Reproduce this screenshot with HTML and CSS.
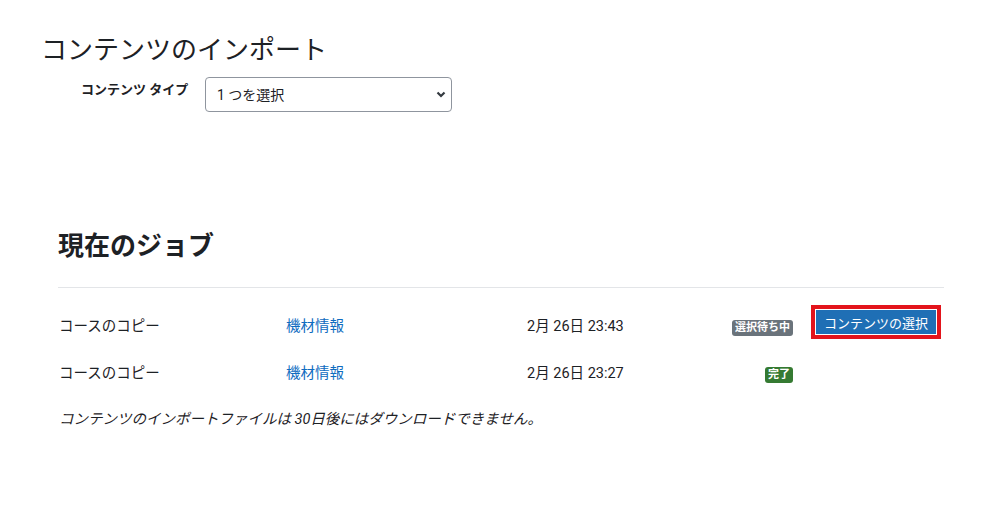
FILE: index.html
```html
<!DOCTYPE html>
<html lang="ja">
<head>
    <meta charset="UTF-8">
    <meta name="viewport" content="width=device-width, initial-scale=1.0">
    <title>コンテンツのインポート</title>
    <link rel="stylesheet" href="styles.css">
</head>
<body>
    <div id="main">
        <h1 class="page-title">コンテンツのインポート</h1>
        <div class="form-row">
            <label class="form-label" for="ctype">コンテンツ タイプ</label>
            <select id="ctype" class="form-select">
                <option>1 つを選択</option>
            </select>
        </div>

        <div class="jobs">
            <h2 class="jobs-title">現在のジョブ</h2>
            <hr class="divider">
            <div class="job">
                <span>コースのコピー</span>
                <a href="#" class="job-link">機材情報</a>
                <span>2月 26日 23:43</span>
                <span class="badge badge-wait">選択待ち中</span>
                <button class="btn-select">コンテンツの選択</button>
            </div>
            <div class="job">
                <span>コースのコピー</span>
                <a href="#" class="job-link">機材情報</a>
                <span>2月 26日 23:27</span>
                <span class="badge badge-done">完了</span>
                <span></span>
            </div>
            <p class="note">コンテンツのインポートファイルは 30日後にはダウンロードできません。</p>
        </div>
    </div>
</body>
</html>
```

FILE: styles.css
```css
body {
    margin: 0;
    font-family: Roboto, "Noto Sans CJK JP", sans-serif;
    font-size: 14.5px;
    color: #1d2125;
    background: #fff;
}
#main {
    padding: 35px 0 0 41px;
}
.page-title {
    margin: 0;
    font-size: 26px;
    font-weight: 400;
    line-height: 31px;
}
.form-row {
    display: flex;
    align-items: flex-start;
    margin-top: 11px;
    padding-left: 40px;
}
.form-label {
    width: 124px;
    font-size: 13px;
    font-weight: 700;
    line-height: 20px;
    padding-top: 3px;
    white-space: nowrap;
}
.form-select {
    appearance: none;
    -webkit-appearance: none;
    box-sizing: border-box;
    width: 247px;
    height: 35px;
    padding: 0 30px 0 11px;
    border: 1px solid #8f959e;
    border-radius: 4px;
    font-family: Roboto, "Noto Sans CJK JP", sans-serif;
    font-size: 14px;
    color: #1d2125;
    background: #fff url("data:image/svg+xml,%3Csvg xmlns='http://www.w3.org/2000/svg' width='10' height='7' viewBox='0 0 10 7'%3E%3Cpath d='M1.5 1.5 5 5 8.5 1.5' fill='none' stroke='%23343a40' stroke-width='2.2'/%3E%3C/svg%3E") no-repeat right 5px center;
}
.jobs {
    width: 886px;
    margin: 119px 0 0 17px;
}
.jobs-title {
    margin: 0;
    font-size: 26px;
    font-weight: 700;
    line-height: 31px;
}
.divider {
    margin: 25px 0 13px;
    border: 0;
    border-top: 1px solid #e3e5e8;
}
.job {
    display: grid;
    grid-template-columns: 227px 241px 205px 61px auto;
    align-items: center;
    height: 47px;
    padding-left: 1px;
}
.job-link {
    color: #0f6cbf;
    text-decoration: none;
}
.badge {
    justify-self: end;
    margin-top: 7px;
    padding: 1px 3px;
    border-radius: 3px;
    font-size: 11px;
    font-weight: 700;
    line-height: 14px;
    color: #fff;
}
.badge-wait {
    background: #6a737b;
}
.badge-done {
    background: #357a32;
}
.btn-select {
    justify-self: start;
    margin: 0 0 5px 23px;
    width: 120px;
    height: 24px;
    padding: 0;
    border: 0;
    border-radius: 0;
    background: #1f6fb5;
    color: #fff;
    font-family: Roboto, "Noto Sans CJK JP", sans-serif;
    font-size: 13px;
    outline: 4px solid #e3141b;
    outline-offset: 1px;
    cursor: pointer;
}
.note {
    margin: 14px 0 0 1px;
    font-style: italic;
    line-height: 22px;
}
```
